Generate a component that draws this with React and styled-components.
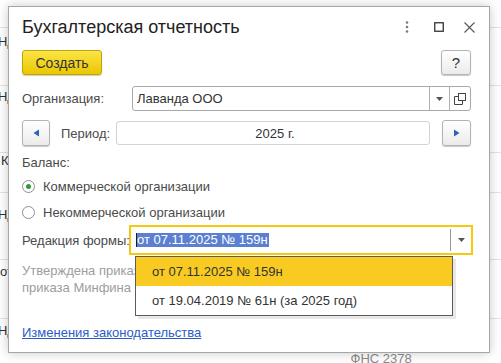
import React from 'react';
import styled, { createGlobalStyle } from 'styled-components';

const Global = createGlobalStyle`
  html, body { margin: 0; padding: 0; }
  body {
    width: 501px; height: 363px; overflow: hidden; background: #fff;
    font-family: "Liberation Sans", Arial, sans-serif;
  }
`;

const Screen = styled.div`
  position: relative;
  width: 501px;
  height: 363px;
  overflow: hidden;
`;

// list in the background, mostly hidden by the dialog
const BgList = styled.div`
  display: flex;
  flex-direction: column;
`;

const BgRow = styled.div`
  height: ${p => p.h}px;
  box-sizing: border-box;
  border-bottom: ${p => (p.last ? 'none' : '1px solid #e3e3e3')};
  display: flex;
  font-size: 13px;
  line-height: 16px;
  color: #333;
`;

const BgCell = styled.div`
  padding-top: ${p => p.pad}px;
  margin-left: ${p => p.ml}px;
  color: ${p => p.muted ? '#8a8a8a' : '#333'};
  white-space: nowrap;
`;

const Dialog = styled.div`
  position: absolute;
  left: 8px;
  top: 6px;
  width: 482px;
  height: 347px;
  box-sizing: border-box;
  border: 1px solid #a6a6a6;
  background: #fff;
  box-shadow: 0 0 10px rgba(0, 0, 0, 0.22);
  padding: 0 18px 0 13px;
  display: flex;
  flex-direction: column;
  color: #444;
  font-size: 13px;
`;

const Header = styled.div`
  height: 40px;
  display: flex;
  align-items: center;
  justify-content: space-between;
  margin-right: -4px;
`;

const Title = styled.div`
  font-size: 18px;
  color: #222;
  white-space: nowrap;
`;

const WinIcons = styled.div`
  display: flex;
  align-items: center;
`;

const WinIcon = styled.span`
  display: flex;
  margin-left: ${p => p.ml || 0}px;
`;

const Toolbar = styled.div`
  margin-top: 3px;
  height: 25px;
  display: flex;
  justify-content: space-between;
`;

const CreateButton = styled.div`
  width: 80px;
  height: 25px;
  box-sizing: border-box;
  border: 1px solid #c2a500;
  border-radius: 3px;
  background: linear-gradient(#fbe548, #eac700);
  box-shadow: 0 1px 1px rgba(0, 0, 0, 0.2);
  display: flex;
  align-items: center;
  justify-content: center;
  font-size: 14px;
  color: #333;
`;

const PlainButton = styled.div`
  width: ${p => p.w}px;
  height: ${p => p.h || 25}px;
  box-sizing: border-box;
  border: 1px solid #b3b3b3;
  border-radius: 3px;
  background: linear-gradient(#ffffff, #ebebeb);
  box-shadow: 0 1px 1px rgba(0, 0, 0, 0.22);
  display: flex;
  align-items: center;
  justify-content: center;
  font-size: 15px;
  color: #333;
  margin-left: ${p => p.ml || 0}px;
  flex-shrink: 0;
`;

const Row = styled.div`
  margin-top: ${p => p.mt}px;
  height: ${p => p.h}px;
  display: flex;
  align-items: center;
`;

const Label = styled.div`
  width: ${p => p.w}px;
  margin-left: ${p => p.ml || 0}px;
  flex-shrink: 0;
  color: #4a4a4a;
  white-space: nowrap;
`;

const InputBox = styled.div`
  flex: 1;
  height: ${p => p.h || 25}px;
  box-sizing: border-box;
  border: 1px solid ${p => p.light ? '#d3d3d3' : '#a9a9a9'};
  border-radius: 3px;
  display: flex;
  align-items: center;
  color: #333;
`;

const InputText = styled.div`
  flex: 1;
  padding-left: 4px;
  text-align: ${p => p.center ? 'center' : 'left'};
  white-space: nowrap;
`;

const FieldButton = styled.div`
  width: ${p => p.w}px;
  align-self: stretch;
  border-left: 1px solid #b0b0b0;
  display: flex;
  align-items: center;
  justify-content: center;
`;

const SectionLabel = styled.div`
  margin-top: 9px;
  line-height: 16px;
  color: #4a4a4a;
`;

const RadioRow = styled.div`
  margin-top: ${p => p.mt || 0}px;
  height: 26px;
  display: flex;
  align-items: center;
  color: #4a4a4a;
`;

const RadioCircle = styled.span`
  width: 13px;
  height: 13px;
  box-sizing: border-box;
  border: 1px solid #8f8f8f;
  border-radius: 50%;
  background: #fff;
  display: flex;
  align-items: center;
  justify-content: center;
  margin-right: 8px;

  &::after {
    content: '';
    width: 5px;
    height: 5px;
    border-radius: 50%;
    background: ${p => (p.checked ? '#2f9a3e' : 'transparent')};
  }
`;

const SelectBox = styled.div`
  position: relative;
  flex: 1;
  height: 30px;
  margin-right: -2px;
  box-sizing: border-box;
  border: 2px solid #f6c80f;
  display: flex;
  align-items: center;
`;

const SelectText = styled.div`
  flex: 1;
  padding-left: 5px;
  display: flex;
`;

const Selected = styled.span`
  background: #5b7fd1;
  color: #fff;
  line-height: 14px;
  padding-right: 1px;
  border-left: 1px solid #1d1d1d;
  white-space: nowrap;
`;

const SelectArrow = styled.div`
  width: 20px;
  height: 22px;
  border-left: 1px solid #999;
  display: flex;
  align-items: center;
  justify-content: center;
`;

const DropList = styled.div`
  position: absolute;
  left: 4px;
  top: 29px;
  width: 318px;
  box-sizing: border-box;
  border: 1px solid #5c5c5c;
  background: #fff;
  box-shadow: 3px 3px 0 rgba(0, 0, 0, 0.09);
  z-index: 5;
`;

const DropItem = styled.div`
  height: 29px;
  padding-left: 16px;
  display: flex;
  align-items: center;
  background: ${p => (p.active ? '#f9cb22' : '#fff')};
  color: #333;
  white-space: nowrap;
`;

const Note = styled.div`
  margin-top: 7px;
  line-height: 17px;
  color: #9d9d9d;
`;

const NoteLine = styled.div`
  white-space: nowrap;
  overflow: hidden;
`;

const Link = styled.a`
  margin-top: 29px;
  line-height: 16px;
  color: #2c5cc5;
  text-decoration: underline;
  align-self: flex-start;
`;

const Triangle = ({ dir }) => (
  <svg width="7" height="8" viewBox="0 0 7 8">
    <polygon
      points={dir === 'left' ? '6,0.5 6,7.5 0.5,4' : '1,0.5 1,7.5 6.5,4'}
      fill="#2e63b8"
    />
  </svg>
);

const DownArrow = () => (
  <svg width="7" height="4" viewBox="0 0 7 4">
    <polygon points="0,0 7,0 3.5,4" fill="#555" />
  </svg>
);

const bgRows = [
  { h: 28 },
  { h: 58, pad: 6, text: 'НДС' },
  { h: 67, pad: 3, text: 'НДС' },
  { h: 40, pad: 0, text: 'К', ml: 1 },
  { h: 67, pad: 14, text: 'НДС' },
  { h: 59, pad: 4, text: 'от', ml: 0 },
  { h: 45, pad: 4, text: 'НДС', extra: 'ФНС 2378', last: true },
];

export default function App() {
  return (
    <Screen>
      <Global />
      <BgList>
        {bgRows.map((r, i) => (
          <BgRow key={i} h={r.h} last={r.last}>
            {r.text && <BgCell pad={r.pad} ml={r.ml ?? -2}>{r.text}</BgCell>}
            {r.extra && <BgCell pad={32} ml={325} muted>{r.extra}</BgCell>}
          </BgRow>
        ))}
      </BgList>

      <Dialog>
        <Header>
          <Title>Бухгалтерская отчетность</Title>
          <WinIcons>
            <WinIcon>
              <svg width="4" height="12" viewBox="0 0 4 12">
                <circle cx="2" cy="1.5" r="1.3" fill="#7a7a7a" />
                <circle cx="2" cy="6" r="1.3" fill="#7a7a7a" />
                <circle cx="2" cy="10.5" r="1.3" fill="#7a7a7a" />
              </svg>
            </WinIcon>
            <WinIcon ml={25}>
              <svg width="10" height="10" viewBox="0 0 10 10">
                <rect x="0.75" y="0.75" width="8.5" height="8.5" fill="none" stroke="#333" strokeWidth="1.3" />
              </svg>
            </WinIcon>
            <WinIcon ml={20}>
              <svg width="11" height="11" viewBox="0 0 11 11">
                <path d="M0.5 0.5 L10.5 10.5 M10.5 0.5 L0.5 10.5" stroke="#555" strokeWidth="1.1" />
              </svg>
            </WinIcon>
          </WinIcons>
        </Header>

        <Toolbar>
          <CreateButton>Создать</CreateButton>
          <PlainButton w={30}>?</PlainButton>
        </Toolbar>

        <Row mt={11} h={25}>
          <Label w={110}>Организация:</Label>
          <InputBox>
            <InputText>Лаванда ООО</InputText>
            <FieldButton w={19}><DownArrow /></FieldButton>
            <FieldButton w={20}>
              <svg width="12" height="12" viewBox="0 0 12 12">
                <rect x="4.5" y="0.5" width="7" height="7" fill="none" stroke="#444" />
                <path d="M4.5 3.5 H0.5 V11.5 H8.5 V7.5" fill="none" stroke="#444" />
              </svg>
            </FieldButton>
          </InputBox>
        </Row>

        <Row mt={9} h={26}>
          <PlainButton w={28} h={26}><Triangle dir="left" /></PlainButton>
          <Label w={55} ml={11}>Период:</Label>
          <InputBox light h={24}>
            <InputText center>2025 г.</InputText>
          </InputBox>
          <PlainButton w={29} h={26} ml={12}><Triangle dir="right" /></PlainButton>
        </Row>

        <SectionLabel>Баланс:</SectionLabel>
        <RadioRow mt={2}>
          <RadioCircle checked />
          Коммерческой организации
        </RadioRow>
        <RadioRow>
          <RadioCircle />
          Некоммерческой организации
        </RadioRow>

        <Row mt={0} h={30}>
          <Label w={107}>Редакция формы:</Label>
          <SelectBox>
            <SelectText>
              <Selected>от 07.11.2025 № 159н</Selected>
            </SelectText>
            <SelectArrow><DownArrow /></SelectArrow>
            <DropList>
              <DropItem active>от 07.11.2025 № 159н</DropItem>
              <DropItem>от 19.04.2019 № 61н (за 2025 год)</DropItem>
            </DropList>
          </SelectBox>
        </Row>

        <Note>
          <NoteLine>Утверждена приказом Минфина России от 02.07.2010 № 66н</NoteLine>
          <NoteLine>приказа Минфина России от 07.11.2025 № 159н)</NoteLine>
        </Note>

        <Link href="#">Изменения законодательства</Link>
      </Dialog>
    </Screen>
  );
}
